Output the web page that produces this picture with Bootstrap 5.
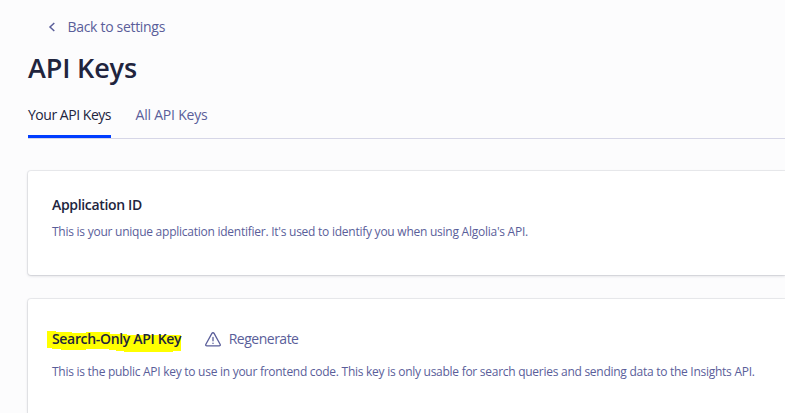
<!DOCTYPE html>
<html lang="en">
<head>
<meta charset="utf-8">
<meta name="viewport" content="width=device-width, initial-scale=1">
<title>API Keys</title>
<link href="https://cdn.jsdelivr.net/npm/bootstrap@5.3.0/dist/css/bootstrap.min.css" rel="stylesheet">
<style>
  body { background: #fcfcfd; color: #21243d; font-family: "Open Sans", "Noto Sans", sans-serif; font-size: 14px; line-height: 20px; }
  .page { padding: 17px 0 0 28px; height: 413px; overflow: hidden; }
  .muted { color: #5a5e9a; }
  .back-link { padding-left: 20px; gap: 11.500px; letter-spacing: -.31px; }
  .page-title { font-size: 27px; line-height: 36px; font-weight: 550; letter-spacing: -.15px; margin-top: 13px; }
  .key-tabs { margin-top: 13px; height: 40px; gap: 24.500px; border-bottom: 1px solid #d6d6e7; }
  .key-tabs .nav-link { padding: 6px 0 0; height: 39px; color: #5a5e9a; letter-spacing: -.22px; }
  .key-tabs .nav-link.active { color: #21243d; border-bottom: 3px solid #003dff; letter-spacing: -.47px; }
  .panel { background: #fff; border-radius: 3px 0 0 3px; padding-left: 24px; box-shadow: 0 0 0 1px rgba(35,38,59,.07), 0 1px 3px rgba(35,38,59,.17); }
  .panel-app { margin-top: 32px; height: 104px; padding-top: 24px; }
  .panel-search { margin-top: 24px; height: 114px; padding-top: 30px; border-bottom-left-radius: 0; }
  .panel h2 { font-size: 14px; line-height: 20px; font-weight: 600; letter-spacing: -.33px; }
  .desc { font-size: 12px; line-height: 18px; letter-spacing: -.25px; white-space: nowrap; }
  .desc-search { margin-top: 14px; letter-spacing: -.27px; }
  .regen { margin-left: 23.500px; gap: 8px; letter-spacing: -.5px; }
  .marker { left: -5px; top: 2px; z-index: 0; }
  .marked span { position: relative; z-index: 1; }
</style>
<script src="https://cdn.jsdelivr.net/npm/bootstrap@5.3.0/dist/js/bootstrap.bundle.min.js"></script>
</head>
<body>
<main class="page">
  <a href="#" class="back-link muted d-flex align-items-center text-decoration-none">
    <svg width="8" height="10" viewBox="0 0 8 10" fill="none" stroke="currentColor" stroke-width="1.5"><path d="M6.3 1 2 5l4.300 4"/></svg>
    <span>Back to settings</span>
  </a>
  <h1 class="page-title mb-0">API Keys</h1>
  <nav class="nav key-tabs">
    <a class="nav-link active" href="#">Your API Keys</a>
    <a class="nav-link" href="#">All API Keys</a>
  </nav>
  <section class="panel panel-app">
    <h2 class="mb-0">Application ID</h2>
    <p class="desc muted mb-0 mt-2">This is your unique application identifier. It's used to identify you when using Algolia's API.</p>
  </section>
  <section class="panel panel-search">
    <div class="d-flex align-items-center">
      <h2 class="marked position-relative mb-0">
        <svg class="marker position-absolute" width="135" height="22" viewBox="0 0 135 22" fill="#ff0"><path d="M0 0h9v1h16v1h14v-1h24v2h17v1h54v16h-8v1H77v-1h-8v-1h-7v-1H39v1H14v-1H5v-1H0z"/></svg>
        <span>Search-Only API Key</span>
      </h2>
      <a href="#" class="regen muted d-flex align-items-center text-decoration-none">
        <svg width="16" height="15" viewBox="0 0 16 15" fill="none" stroke="currentColor" stroke-width="1.300" stroke-linejoin="round" stroke-linecap="round"><path d="M6.900 1.400.9 12.200c-.5.900 0 1.700 1 1.700h12.200c1 0 1.500-.8 1-1.700L9.100 1.400c-.5-.9-1.700-.9-2.200 0zM8 5.300v3.500M8 11.200v.2"/></svg>
        <span>Regenerate</span>
      </a>
    </div>
    <p class="desc desc-search muted mb-0">This is the public API key to use in your frontend code. This key is only usable for search queries and sending data to the Insights API.</p>
  </section>
</main>
</body>
</html>
